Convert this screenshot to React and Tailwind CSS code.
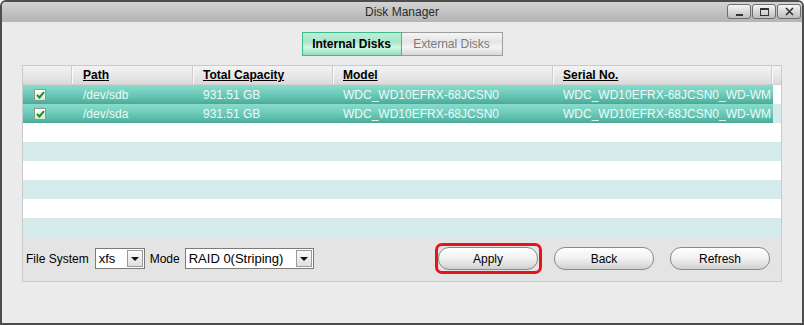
import React from "react";

const cols = [
  { w: "w-[50px]", label: "" },
  { w: "w-[121px]", label: "Path", pl: "pl-[10px]" },
  { w: "w-[140px]", label: "Total Capacity" },
  { w: "w-[220px]", label: "Model" },
  { w: "w-[219px]", label: "Serial No." },
];

const rows = [
  ["/dev/sdb", "931.51 GB", "WDC_WD10EFRX-68JCSN0", "WDC_WD10EFRX-68JCSN0_WD-WM"],
  ["/dev/sda", "931.51 GB", "WDC_WD10EFRX-68JCSN0", "WDC_WD10EFRX-68JCSN0_WD-WM"],
];

function Checkbox() {
  return (
    <div className="w-[12px] h-[12px] border border-[#8d9a90] bg-[linear-gradient(to_bottom,#ffffff,#cdeccf)] flex items-center justify-center">
      <svg width="9" height="8" viewBox="0 0 9 8">
        <path d="M1 4 L3.5 6.5 L8 1.2" stroke="#1f8a2e" strokeWidth="2" fill="none" />
      </svg>
    </div>
  );
}

function WinBtn({ children }) {
  return (
    <div className="w-[24px] h-[15px] border border-[#6e6e6e] rounded-[3px] bg-[linear-gradient(to_bottom,#f6f6f6,#d6d6d6_55%,#bdbdbd)] flex items-center justify-center">
      {children}
    </div>
  );
}

function Select({ value, w }) {
  return (
    <div className={`${w} h-[21px] border border-[#7b7b7b] bg-white flex items-center`}>
      <span className="flex-1 pl-[3px] text-[13px] text-black leading-none whitespace-nowrap">{value}</span>
      <div className="w-[16px] h-[17px] mr-[1px] border border-[#9a9a9a] bg-[linear-gradient(to_bottom,#fbfbfb,#dedede)] flex items-center justify-center">
        <svg width="8" height="4" viewBox="0 0 8 4">
          <path d="M0 0 H8 L4 4 Z" fill="#111" />
        </svg>
      </div>
    </div>
  );
}

function Btn({ children }) {
  return (
    <div className="w-[100px] h-[23px] rounded-[11px] border border-[#8a8a8a] bg-[linear-gradient(to_bottom,#ffffff,#f2f2f2_45%,#dedede_80%,#cfcfcf)] flex items-center justify-center text-[12px] text-black">
      {children}
    </div>
  );
}

export default function App() {
  return (
    <div className="w-[804px] h-[325px] bg-[#ebebeb] border-2 border-[#4d4d4d] rounded-t-[6px] flex flex-col overflow-hidden font-['Liberation_Sans',Arial,sans-serif]">
      {/* title bar */}
      <div className="h-[20px] shrink-0 bg-[linear-gradient(to_bottom,#d4d4d4,#c2c2c2_50%,#b4b4b4)] flex items-center relative">
        <div className="flex-1 text-center text-[12px] text-[#2a2a2a]">Disk Manager</div>
        <div className="absolute right-[1px] top-[2px] flex gap-[1px]">
          <WinBtn>
            <div className="w-[7px] h-[2px] bg-[#333] mt-[6px]" />
          </WinBtn>
          <WinBtn>
            <div className="w-[9px] h-[8px] border border-[#333] border-t-2" />
          </WinBtn>
          <WinBtn>
            <svg width="9" height="9" viewBox="0 0 9 9">
              <path d="M1 1 L8 8 M8 1 L1 8" stroke="#333" strokeWidth="1.6" />
            </svg>
          </WinBtn>
        </div>
      </div>

      {/* tabs */}
      <div className="mt-[10px] flex justify-center">
        <div className="flex">
          <div className="w-[100px] h-[24px] border border-[#3db98b] bg-[linear-gradient(to_bottom,#bdeed8,#a6e6c8_40%,#d2f6e6_65%,#92dfbb)] flex items-center justify-center text-[12px] font-bold text-black">
            Internal Disks
          </div>
          <div className="w-[101px] h-[24px] border border-l-0 border-[#9d9d9d] bg-[linear-gradient(to_bottom,#f5f5f5,#e4e4e4_40%,#f4f4f4_65%,#d8d8d8)] flex items-center justify-center text-[12px] text-[#7a7a7a]">
            External Disks
          </div>
        </div>
      </div>

      {/* panel */}
      <div className="mt-[9px] ml-[20px] w-[760px] border border-[#c9c9c9] bg-[#e4e4e4] flex flex-col">
        {/* header */}
        <div className="h-[19px] flex bg-[linear-gradient(to_bottom,#f3f3f3,#e6e6e6_60%,#dadada)] border-b border-[#d0d0d0]">
          {cols.map((c, i) => (
            <div
              key={i}
              className={`${c.w} h-full border-r border-[#fafafa] shadow-[inset_-1px_0_0_#cdcdcd] flex items-center ${c.pl || "pl-[9px]"} text-[12px] font-bold text-black underline`}
            >
              {c.label}
            </div>
          ))}
          <div className="flex-1 h-full" />
        </div>
        {/* body */}
        <div className="flex flex-col">
          {Array.from({ length: 8 }).map((_, i) => {
            const data = rows[i];
            return (
              <div
                key={i}
                className={`h-[19px] flex ${i % 2 === 1 ? "bg-[#d5eaeb]" : "bg-white"}`}
              >
                {data && (
                  <div className="w-[750px] h-full flex bg-[linear-gradient(to_bottom,#8adccd,#6fcbbb_45%,#58b9a7_80%,#4aa995)] text-[12px] text-[#ecfaf6]">
                    <div className="w-[50px] h-full flex items-center pl-[11px]">
                      <Checkbox />
                    </div>
                    {data.map((t, j) => (
                      <div
                        key={j}
                        className={`${cols[j + 1].w} h-full flex items-center ${cols[j + 1].pl || "pl-[9px]"} whitespace-nowrap`}
                      >
                        {t}
                      </div>
                    ))}
                  </div>
                )}
              </div>
            );
          })}
        </div>
        {/* controls */}
        <div className="h-[44px] flex items-start pt-[10px] pl-[3px] pr-[11px]">
          <div className="flex items-center h-[23px] text-[12px] text-black">
            <span>File System</span>
            <div className="ml-[6px]">
              <Select value="xfs" w="w-[50px]" />
            </div>
            <span className="ml-[5px]">Mode</span>
            <div className="ml-[5px]">
              <Select value="RAID 0(Striping)" w="w-[129px]" />
            </div>
          </div>
          <div className="flex-1" />
          <div className="relative">
            <div className="absolute left-[-3px] right-[-4px] top-[-4px] bottom-[-4px] border-[3px] border-[#e3151c] rounded-[7px]" />
            <Btn>Apply</Btn>
          </div>
          <div className="ml-[16px]">
            <Btn>Back</Btn>
          </div>
          <div className="ml-[16px]">
            <Btn>Refresh</Btn>
          </div>
        </div>
      </div>
    </div>
  );
}
